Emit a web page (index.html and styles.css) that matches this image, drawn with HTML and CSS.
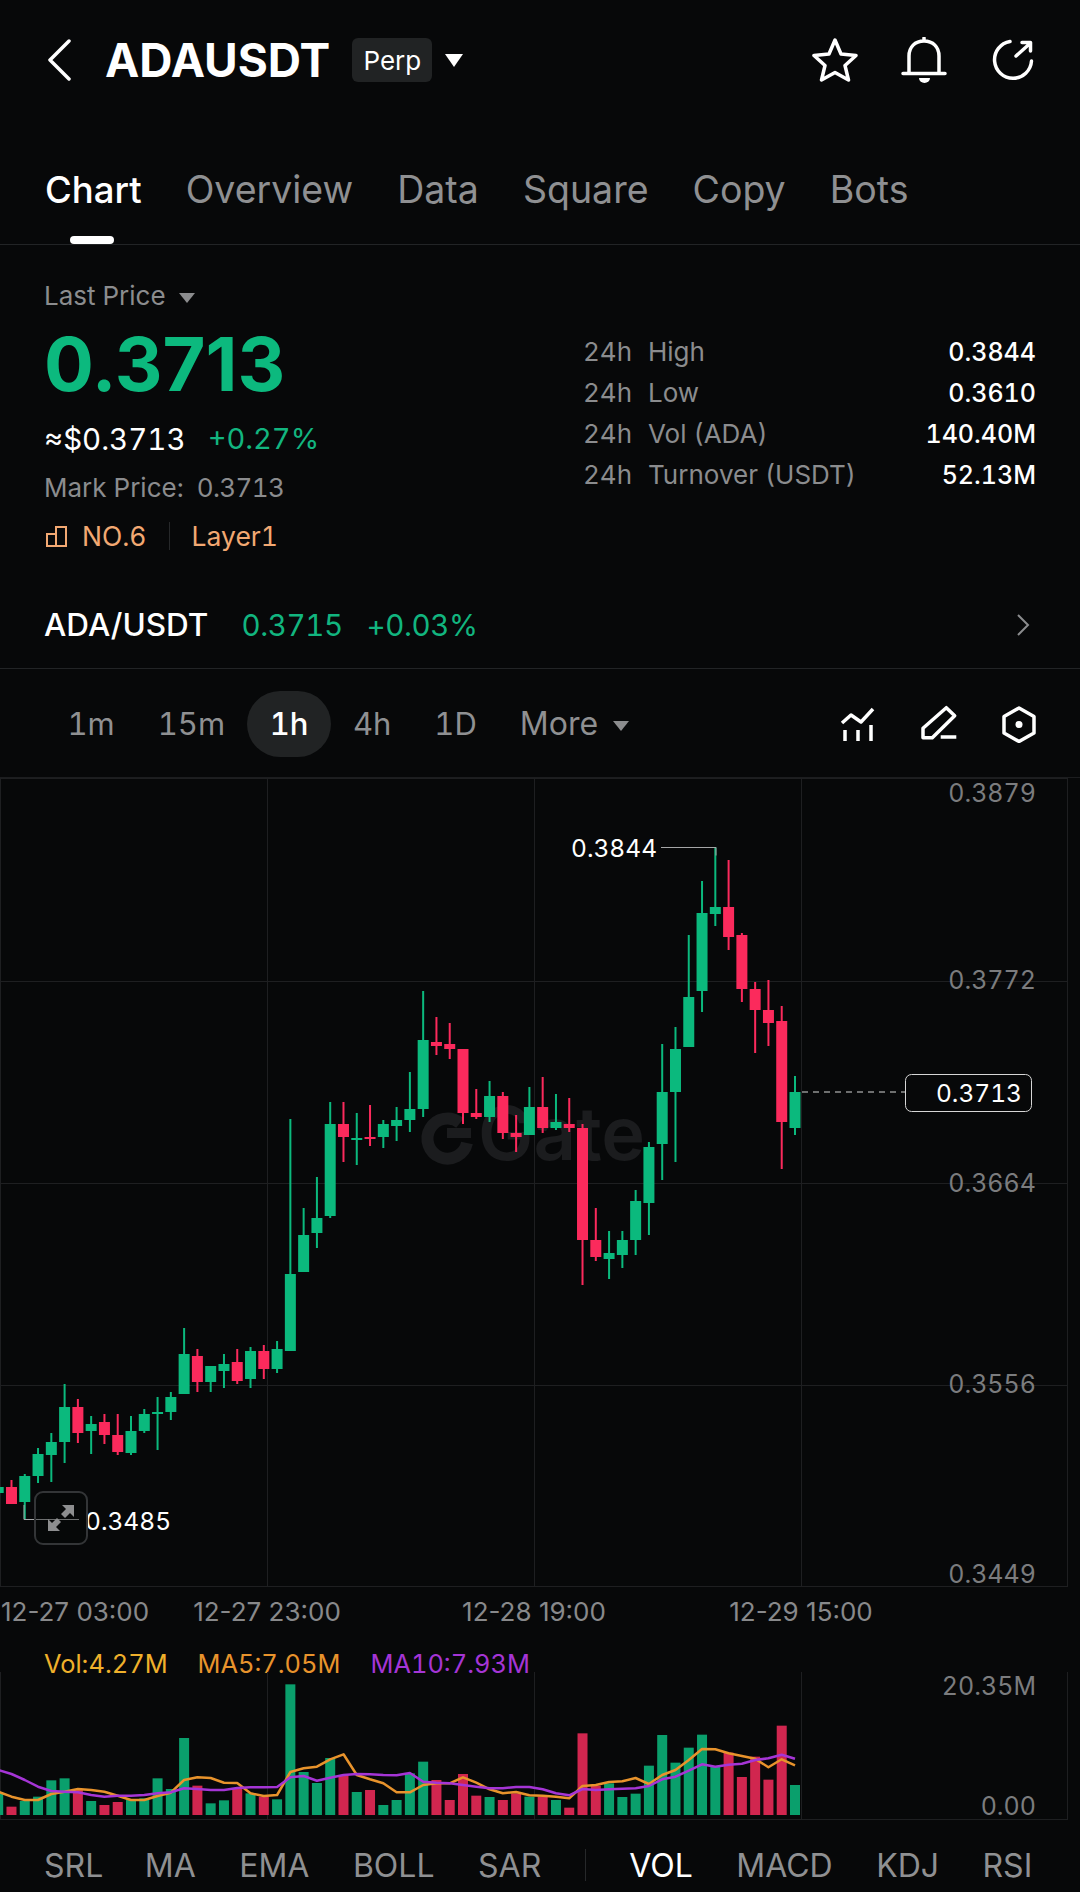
FILE: index.html
```html
<!DOCTYPE html>
<html>
<head>
    <title>ADAUSDT</title>
    <link rel="stylesheet" href="styles.css">
</head>
<body>
    <div class="page">
        <header class="topbar">
            <svg class="back" viewBox="0 0 24 42"><path d="M22 2 3 21l19 19" /></svg>
            <span class="symbol">ADAUSDT</span>
            <span class="badge">Perp</span>
            <span class="caret caret-white"></span>
            <div class="top-icons">
                <svg class="icon" viewBox="0 0 46 46"><path d="M23 3l6 14 15 1.500-11 10 3.500 14.500L23 35.500 9.500 43 13 28.500l-11-10L17 17z" /></svg>
                <svg class="icon" viewBox="-2 0 46 46"><path d="M21 1v3M6 36V19C6 10 12 4 21 4s15 6 15 15v17M0 36.500h42" /><path class="solid" d="M16 41h11a5.500 5 0 0 1-11 0z" /></svg>
                <svg class="icon" viewBox="-2 0 46 46"><path d="M18 4.500A18.500 18.500 0 1 0 39.500 24M24 19 38.500 6M30 5.500h8.500V14" /></svg>
            </div>
        </header>

        <nav class="tabs">
            <a class="tab tab-active">Chart</a>
            <a class="tab">Overview</a>
            <a class="tab">Data</a>
            <a class="tab">Square</a>
            <a class="tab">Copy</a>
            <a class="tab">Bots</a>
        </nav>

        <section class="summary">
            <div class="summary-left">
                <div class="last-price">Last Price <span class="caret caret-grey"></span></div>
                <div class="price">0.3713</div>
                <div class="fiat"><span class="fiat-value">≈$0.3713</span><span class="green">+0.27%</span></div>
                <div class="mark"><span>Mark Price:</span><span class="mark-value">0.3713</span></div>
                <div class="tags">
                    <svg class="rank-icon" viewBox="0 0 22 22"><path d="M1 9h9v12H1zM10 2h10v19H10z" /></svg>
                    <span>NO.6</span>
                    <i class="tag-line"></i>
                    <span>Layer1</span>
                </div>
            </div>
            <div class="stats">
                <div class="stat"><span class="stat-h">24h</span><span class="stat-name">High</span><span class="stat-val">0.3844</span></div>
                <div class="stat"><span class="stat-h">24h</span><span class="stat-name">Low</span><span class="stat-val">0.3610</span></div>
                <div class="stat"><span class="stat-h">24h</span><span class="stat-name">Vol (ADA)</span><span class="stat-val">140.40M</span></div>
                <div class="stat"><span class="stat-h">24h</span><span class="stat-name">Turnover (USDT)</span><span class="stat-val">52.13M</span></div>
            </div>
        </section>

        <section class="spot">
            <span class="spot-name">ADA/USDT</span>
            <span class="green">0.3715</span>
            <span class="green">+0.03%</span>
            <svg class="chevron" viewBox="0 0 14 24"><path d="M2 2l10 10L2 22" /></svg>
        </section>

        <section class="periods">
            <a class="period">1m</a>
            <a class="period">15m</a>
            <a class="period period-active">1h</a>
            <a class="period">4h</a>
            <a class="period">1D</a>
            <a class="period period-more">More <span class="caret caret-grey"></span></a>
            <div class="tools">
                <svg class="tool" viewBox="0 0 38 38"><path d="M2 18l9-8 10 7L33 4M5 25v11M18 25v11M31 20v16" /></svg>
                <svg class="tool" viewBox="0 0 38 38"><path d="M3 32.700V23.300L26.300 2.700l8.400 8L12.300 32.700zM20.700 32h15.600" /></svg>
                <svg class="tool" viewBox="0 0 38 38"><path d="M19 3l15 8.500V28l-15 8.500L4 28V11.500z" /><circle cx="19" cy="19.500" r="3.500" fill="#fff" /></svg>
            </div>
        </section>

        <section class="main-chart">
            <svg id="candles" class="chart-svg" viewBox="0 778 1080 854">
                <g id="candle-grid"></g>
                <g class="watermark">
                    <path d="M460 1123a20 20 0 1 0 7 20" />
                    <rect x="447" y="1128" width="24" height="10" />
                    <text x="478" y="1160">Gate</text>
                </g>
                <g id="candle-bars"></g>
                <g class="axis">
                    <text x="1036" y="802">0.3879</text>
                    <text x="1036" y="989">0.3772</text>
                    <text x="1036" y="1192">0.3664</text>
                    <text x="1036" y="1393">0.3556</text>
                    <text x="1036" y="1583">0.3449</text>
                </g>
                <g class="dates">
                    <text x="1" y="1621" class="date-first">12-27 03:00</text>
                    <text x="267" y="1621">12-27 23:00</text>
                    <text x="534" y="1621">12-28 19:00</text>
                    <text x="801" y="1621">12-29 15:00</text>
                </g>
                <path class="marker" d="M661 847.500h55v8" />
                <text class="mark-label" x="571" y="857">0.3844</text>
                <path class="marker" d="M24 1505v14.500h55" />
                <text class="mark-label" x="85" y="1530">0.3485</text>
                <path class="now-line" d="M802 1092h103" />
                <rect class="now-box" x="905.500" y="1074.500" width="126" height="37" rx="6" />
                <text class="mark-label now-label" x="1022" y="1102">0.3713</text>
            </svg>
            <div class="expand">
                <svg viewBox="0 0 28 28"><path d="M15 1h12v12l-4-4-5 5-4-4 5-5zM13 27H1V15l4 4 5-5 4 4-5 5z" /></svg>
            </div>
        </section>

        <section class="vol-section">
            <div class="vol-legend">
                <span class="c-vol">Vol:4.27M</span>
                <span class="c-ma5">MA5:7.05M</span>
                <span class="c-ma10">MA10:7.93M</span>
            </div>
            <svg id="volume" class="vol-svg" viewBox="0 1672 1080 148">
                <g id="volume-grid"></g>
                <g id="volume-bars"></g>
                <g class="axis">
                    <text x="1036" y="1695">20.35M</text>
                    <text x="1036" y="1815">0.00</text>
                </g>
            </svg>
        </section>

        <nav class="indicators">
            <a class="ind ind-first">SRL</a>
            <a class="ind">MA</a>
            <a class="ind">EMA</a>
            <a class="ind">BOLL</a>
            <a class="ind">SAR</a>
            <i class="ind-line"></i>
            <a class="ind ind-active">VOL</a>
            <a class="ind">MACD</a>
            <a class="ind">KDJ</a>
            <a class="ind">RSI</a>
        </nav>
    </div>
    <script src="chart.js"></script>
</body>
</html>
```

FILE: styles.css
```css
* {
    box-sizing: border-box;
}
body {
    margin: 0;
    background: #070809;
    font-family: Inter, "Liberation Sans", sans-serif;
    font-feature-settings: "tnum";
    color: #fff;
}
.page {
    width: 1080px;
    height: 1892px;
    overflow: hidden;
}
.green {
    color: #12b57f;
}
.caret {
    display: inline-block;
    width: 0;
    height: 0;
    border-left: 9px solid transparent;
    border-right: 9px solid transparent;
    border-top: 13px solid #fff;
}
.caret-white {
    margin-left: 13px;
}
.caret-grey {
    border-left-width: 8px;
    border-right-width: 8px;
    border-top: 10px solid #8b8c8e;
    margin-left: 6px;
    vertical-align: middle;
}

/* top bar */
.topbar {
    height: 120px;
    display: flex;
    align-items: center;
    padding: 0 44px 0 47px;
}
.back {
    width: 24px;
    height: 42px;
    margin-right: 34px;
}
.back path,
.icon path {
    fill: none;
    stroke: #fff;
    stroke-width: 3.5;
    stroke-linejoin: round;
    stroke-linecap: round;
}
.icon .solid {
    fill: #fff;
    stroke: none;
}
.symbol {
    font-size: 46px;
    font-weight: 700;
    margin-right: 22px;
}
.badge {
    width: 80px;
    height: 44px;
    background: #212324;
    border-radius: 6px;
    font-size: 26px;
    display: flex;
    align-items: center;
    justify-content: center;
}
.top-icons {
    margin-left: auto;
    display: flex;
    gap: 43px;
}
.icon {
    width: 46px;
    height: 46px;
}

/* tabs */
.tabs {
    height: 125px;
    display: flex;
    gap: 44px;
    padding: 48px 0 0 45px;
    border-bottom: 1px solid #222426;
}
.tab {
    position: relative;
    height: 44px;
    font-size: 37.500px;
    line-height: 44px;
    color: #8f9092;
}
.tab-active {
    color: #fff;
    font-size: 36.500px;
    font-weight: 500;
}
.tab-active::after {
    content: "";
    position: absolute;
    left: 25px;
    top: 68px;
    width: 44px;
    height: 8px;
    border-radius: 4px;
    background: #fff;
}

/* price summary */
.summary {
    height: 338px;
    display: flex;
    padding: 34px 44px 0 44px;
    font-size: 26px;
}
.summary-left {
    width: 539px;
}
.last-price {
    line-height: 34px;
    color: #8b8c8e;
}
.price {
    font-size: 74px;
    font-feature-settings: normal;
    font-weight: 700;
    line-height: 84px;
    color: #0cb97e;
    margin-top: 9px;
}
.fiat {
    display: flex;
    gap: 22px;
    font-size: 29px;
    line-height: 38px;
    margin-top: 14px;
}
.fiat-value {
    font-size: 29.500px;
}
.mark {
    display: flex;
    gap: 13px;
    line-height: 34px;
    color: #8b8c8e;
    margin-top: 13px;
}
.mark-value {
    letter-spacing: -0.6px;
}
.tags {
    display: flex;
    align-items: center;
    font-size: 26.500px;
    line-height: 34px;
    color: #f2a872;
    margin-top: 14px;
}
.rank-icon {
    width: 22px;
    height: 22px;
    margin: 0 14px 0 2px;
}
.rank-icon path {
    fill: none;
    stroke: #f2a872;
    stroke-width: 2;
}
.tag-line {
    width: 1px;
    height: 28px;
    background: #26282a;
    margin: 0 22px;
}
.stats {
    flex: 1;
    padding-top: 52px;
}
.stat {
    display: flex;
    height: 41px;
    align-items: center;
    color: #8b8c8e;
}
.stat-h {
    width: 65px;
}
.stat-val {
    margin-left: auto;
    color: #fff;
    font-size: 25px;
    font-weight: 500;
}

/* spot row */
.spot {
    height: 86px;
    display: flex;
    align-items: center;
    gap: 24px;
    padding: 0 50px 2px 44px;
    font-size: 29.500px;
    border-bottom: 1px solid #222426;
}
.spot .green {
    letter-spacing: -0.4px;
}
.spot-name {
    font-size: 31.500px;
    font-weight: 500;
    margin-right: 9px;
}
.chevron {
    margin-left: auto;
    width: 14px;
    height: 24px;
}
.chevron path {
    fill: none;
    stroke: #8b8c8e;
    stroke-width: 2;
}

/* period row */
.periods {
    height: 109px;
    display: flex;
    align-items: center;
    padding: 2px 42px 0 46px;
    font-size: 31px;
    color: #8f9092;
    border-bottom: 1px solid #1c1d1f;
}
.period {
    height: 66px;
    line-height: 66px;
    padding: 0 21.500px;
    border-radius: 33px;
}
.period-active {
    padding: 0 23px;
    background: #212324;
    color: #fff;
    font-weight: 500;
}
.period-more {
    font-size: 32px;
}
.tools {
    margin-left: auto;
    display: flex;
    gap: 42px;
    align-items: center;
}
.tool {
    width: 38px;
    height: 38px;
}
.tool path {
    fill: none;
    stroke: #fff;
    stroke-width: 3.5;
    stroke-linejoin: round;
}

/* charts */
.main-chart {
    position: relative;
    height: 854px;
}
.chart-svg,
.vol-svg {
    display: block;
    width: 1080px;
}
.chart-svg {
    height: 854px;
}
.axis text {
    font-size: 25px;
    fill: #7b7c7e;
    text-anchor: end;
}
.dates text {
    font-size: 26px;
    font-feature-settings: normal;
    fill: #88898b;
    text-anchor: middle;
}
.dates .date-first {
    text-anchor: start;
}
.mark-label {
    font-size: 24.500px;
    fill: #fff;
}
.now-label {
    text-anchor: end;
}
.marker {
    fill: none;
    stroke: #a5a6a7;
    stroke-width: 1;
}
.now-line {
    stroke: #d6d6d6;
    stroke-width: 1;
    stroke-dasharray: 6 5;
}
.now-box {
    fill: #070809;
    stroke: #d6d6d6;
    stroke-width: 1;
}
.watermark path {
    fill: none;
    stroke: #1b1c1e;
    stroke-width: 12;
}
.watermark rect {
    fill: #1b1c1e;
}
.watermark text {
    font-size: 74px;
    font-weight: 600;
    font-feature-settings: normal;
    fill: #1b1c1e;
}
.expand {
    position: absolute;
    left: 34px;
    top: 713px;
    width: 54px;
    height: 54px;
    border: 2px solid #333537;
    border-radius: 9px;
    background: rgba(7, 8, 9, 0.35);
    display: flex;
    align-items: center;
    justify-content: center;
}
.expand svg {
    width: 28px;
    height: 28px;
}
.expand path {
    fill: #8d8e8f;
}

/* volume */
.vol-section {
    height: 188px;
    padding-top: 19px;
}
.vol-legend {
    display: flex;
    gap: 30px;
    height: 21px;
    line-height: 26px;
    padding-left: 44px;
    font-size: 25.400px;
}
.c-vol {
    color: #efb02b;
}
.c-ma5 {
    color: #e8932c;
}
.c-ma10 {
    color: #a535d6;
}
.vol-svg {
    height: 148px;
}

/* indicator tabs */
.indicators {
    height: 72px;
    display: flex;
    align-items: center;
    gap: 43.500px;
    padding: 18px 0 0 44px;
    font-size: 32px;
    color: #8f9092;
}
.ind-first {
    margin-right: -2px;
}
.ind-active {
    color: #fff;
}
.ind-line {
    width: 1px;
    height: 32px;
    background: #26282a;
}
```

FILE: chart.js
```js
// [colour, wick top, wick bottom, body top, body bottom], page pixels, oldest first
const candles = [
    ["g",1480,1496,1487,1493],["r",1480,1504,1487,1504],["g",1474,1519,1476,1502],["g",1448,1483,1454,1476],
    ["g",1433,1482,1442,1455],["g",1384,1463,1407,1442],["r",1399,1443,1407,1433],["g",1416,1454,1424,1431],
    ["r",1414,1444,1422,1435],["r",1414,1455,1435,1452],["g",1416,1455,1431,1453],["g",1409,1433,1414,1431],
    ["g",1397,1450,1412,1414],["g",1392,1420,1397,1412],["g",1328,1394,1354,1394],["r",1349,1392,1356,1382],
    ["g",1366,1392,1366,1382],["g",1354,1388,1364,1371],["r",1349,1384,1362,1381],["g",1347,1388,1351,1379],
    ["r",1345,1379,1351,1369],["g",1341,1373,1349,1369],["g",1119,1351,1274,1351],["g",1208,1272,1235,1272],
    ["g",1177,1248,1218,1233],["g",1102,1218,1124,1216],["r",1102,1162,1124,1137],["g",1113,1165,1138,1140],
    ["r",1105,1146,1137,1139],["g",1120,1148,1124,1137],["g",1107,1141,1120,1126],["g",1072,1132,1109,1120],
    ["g",991,1117,1040,1109],["r",1017,1055,1042,1046],["r",1023,1059,1044,1049],["r",1049,1124,1049,1113],
    ["r",1089,1119,1113,1117],["g",1081,1122,1096,1117],["r",1092,1139,1096,1133],["r",1115,1152,1133,1137],
    ["g",1087,1135,1107,1135],["r",1077,1133,1107,1128],["g",1094,1130,1122,1128],["r",1098,1132,1124,1128],
    ["r",1124,1285,1128,1240],["r",1208,1261,1240,1257],["g",1231,1279,1253,1259],["g",1231,1268,1240,1255],
    ["g",1190,1255,1201,1240],["g",1142,1235,1147,1203],["g",1044,1180,1092,1144],["g",1027,1162,1049,1092],
    ["g",935,1047,997,1047],["g",881,1012,913,991],["g",847,926,907,914],["r",860,950,907,937],
    ["r",933,1002,935,989],["r",982,1053,989,1010],["r",980,1046,1010,1023],["r",1006,1169,1021,1122],
    ["g",1076,1135,1092,1128]
];

// bar tops and line points as read off the reference, page y = 1620 + value / 3
const volTops = [
    520,560,543,530,481,475,510,543,555,546,540,535,475,507,354,497,550,541,505,520,530,538,193,456,489,414,465,
    516,510,555,540,460,425,480,540,462,527,531,540,520,530,530,540,563,340,497,490,531,521,437,345,428,383,344,
    440,398,471,410,479,317,495
];
const volReds = [1,6,8,9,15,18,20,26,28,33,34,35,36,38,39,41,43,44,45,55,56,57,58,59];
const ma5 = [
    515,530,540,540,522,515,507,510,515,527,540,540,528,518,480,472,474,488,489,520,528,525,456,445,440,418,403,
    465,478,490,517,517,495,490,490,472,488,508,520,516,526,527,530,535,498,495,486,484,474,492,465,450,420,387,
    388,400,408,416,442,418,436
];
const ma10 = [
    450,462,480,500,513,515,517,525,530,527,527,525,520,517,505,507,510,510,504,502,502,501,472,468,482,473,465,
    462,463,465,466,459,485,488,490,495,500,505,505,501,501,508,520,526,507,510,508,506,505,498,478,470,452,433,
    440,434,431,420,415,404,416
];

const NS = "http://www.w3.org/2000/svg";
const LAST_X = 795;
const STEP = 13.28;
const xAt = i => LAST_X - STEP * (candles.length - 1 - i);

function add(parent, tag, attrs) {
    const el = document.createElementNS(NS, tag);
    for (const k in attrs) el.setAttribute(k, attrs[k]);
    parent.appendChild(el);
}

function drawGrid(parent, rows, top, bottom) {
    rows.forEach(y => add(parent, "line", { x1: 0, x2: 1068, y1: y, y2: y, stroke: "#1e1f21" }));
    [0.5, 267.5, 534.5, 801.5, 1067.5].forEach(x =>
        add(parent, "line", { x1: x, x2: x, y1: top, y2: bottom, stroke: "#1e1f21" }));
}

drawGrid(document.getElementById("candle-grid"), [778.5, 981.5, 1183.5, 1385.5, 1586.5], 778, 1586);
drawGrid(document.getElementById("volume-grid"), [1819.5], 1672, 1820);

const bars = document.getElementById("candle-bars");
candles.forEach((c, i) => {
    const color = c[0] === "g" ? "#0bb97d" : "#fb2a5c";
    const x = xAt(i);
    add(bars, "rect", { x: x - 1, y: c[1], width: 2, height: c[2] - c[1], fill: color });
    add(bars, "rect", { x: x - 5.5, y: c[3], width: 11, height: c[4] - c[3], fill: color });
});

const vol = document.getElementById("volume-bars");
const yOf = v => 1620 + v / 3;
volTops.forEach((top, i) => {
    const color = volReds.includes(i) ? "#d1264f" : "#0a9f6c";
    add(vol, "rect", { x: xAt(i) - 5, y: yOf(top), width: 10, height: 1815 - yOf(top), fill: color });
});

function drawLine(values, color) {
    const pts = values.map((v, i) => xAt(i).toFixed(1) + "," + yOf(v).toFixed(1)).join(" ");
    add(vol, "polyline", { points: pts, fill: "none", stroke: color, "stroke-width": 2.5, "stroke-linejoin": "round" });
}
drawLine(ma5, "#e8932c");
drawLine(ma10, "#a535d6");
```
